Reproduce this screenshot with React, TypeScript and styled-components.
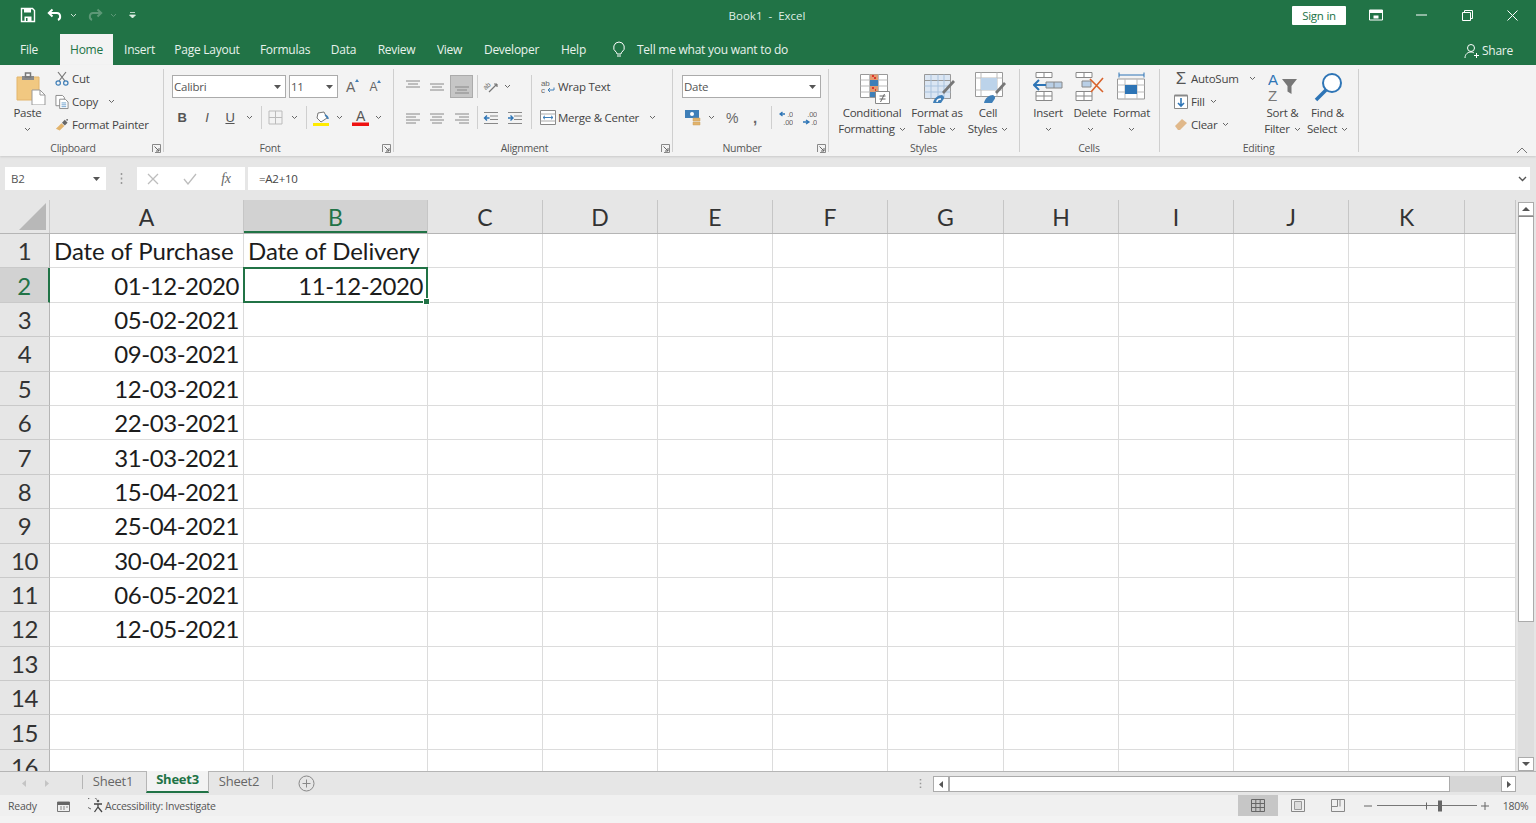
import React from "react";
import styled, { createGlobalStyle } from "styled-components";

const Global = createGlobalStyle`
  html, body { margin: 0; padding: 0; height: 100%; overflow: hidden; background: #f3f3f3; }
  #root { height: 100%; }
  * { box-sizing: border-box; }
`;

const UI = `"Open Sans", "Noto Sans", "Liberation Sans", sans-serif`;
const GREEN = "#217346";

const Page = styled.div`
  width: 1536px; height: 823px; display: flex; flex-direction: column;
  font-family: ${UI}; font-size: 11.5px; color: #444; letter-spacing: -0.25px; overflow: hidden;
`;
const TitleBar = styled.header`
  height: 33px; flex: none; background: ${GREEN}; display: flex; align-items: center; color: #fff; position: relative; padding-bottom: 3px;
`;
const Slot = styled.div<{ $w: number }>`
  width: ${p => p.$w}px; flex: none; display: flex; align-items: center; justify-content: center; height: 100%;
`;
const Spacer = styled.div<{ $w?: number }>`
  ${p => (p.$w ? `width:${p.$w}px; flex:none;` : "flex:1;")}
`;
const WindowTitle = styled.div`
  width: 200px; flex: none; text-align: center; color: #dfeee5; font-size: 11.5px; white-space: pre; letter-spacing: 0;
`;
const SignIn = styled.div`
  width: 54px; height: 19px; flex: none; background: #fff; color: ${GREEN}; display: flex; align-items: center; justify-content: center; font-size: 11.5px; border-radius: 1px;
`;
const TabBar = styled.nav`
  height: 32px; flex: none; background: ${GREEN}; display: flex; align-items: flex-end; color: #e8f2ec; font-size: 12px;
`;
const Tab = styled.div<{ $w: number; $active?: boolean }>`
  width: ${p => p.$w}px; flex: none; height: 31px; display: flex; align-items: center; justify-content: center; white-space: nowrap; padding-bottom: 1px;
  ${p => p.$active && `background:#f3f3f3; color:${GREEN};`}
`;
const TabGap = styled.div<{ $w: number }>` width: ${p => p.$w}px; flex: none; `;
const TellMe = styled.div`
  flex: none; height: 31px; display: flex; align-items: center; gap: 11px; white-space: nowrap; color: #e8f2ec; padding-bottom: 1px;
`;
const Share = styled.div`
  flex: none; height: 31px; display: flex; align-items: center; gap: 2px; margin: 0 23px 0 auto; color: #e8f2ec; padding-top: 2px;
`;

const Ribbon = styled.section`
  height: 91px; flex: none; background: #f3f3f3; display: flex; position: relative; box-shadow: 0 1px 2px rgba(0,0,0,.12); z-index: 2;
`;
const Group = styled.div<{ $w: number }>`
  width: ${p => p.$w}px; flex: none; display: flex; flex-direction: column; position: relative; 
  &::after { content: ""; position: absolute; right: 0; top: 4px; bottom: 4px; width: 1px; background: #cfcfcf; }
`;
const GroupBody = styled.div<{ $pl?: number; $pt?: number }>`
  height: 75px; flex: none; display: flex; padding-left: ${p => p.$pl ?? 0}px; padding-top: ${p => p.$pt ?? 0}px;
`;
const GroupLabel = styled.div<{ $launcher?: boolean }>`
  height: 16px; flex: none; text-align: center; font-size: 10.5px; line-height: 16px; color: #555;
  padding-right: ${p => (p.$launcher ? 18 : 2)}px;
`;
const Launcher = styled.svg`
  position: absolute; right: 3px; bottom: 3px; width: 9px; height: 9px;
`;
const Stack = styled.div<{ $w?: number }>`
  display: flex; flex-direction: column; gap: 8px; ${p => p.$w && `width:${p.$w}px; flex:none;`}
`;
const Row = styled.div`
  height: 23px; display: flex; align-items: center; white-space: nowrap;
`;
const SmallList = styled.div<{ $w: number }>`
  width: ${p => p.$w}px; flex: none; display: flex; flex-direction: column; padding-top: 2px;
`;
const SmallItem = styled.div`
  height: 23px; display: flex; align-items: center; white-space: nowrap;
`;
const Big = styled.div<{ $w: number }>`
  width: ${p => p.$w}px; flex: none; display: flex; flex-direction: column; align-items: center; padding-top: 7px;
`;
const BigIcon = styled.div<{ $shift?: number }>`
  height: 33px; display: flex; align-items: flex-start; justify-content: center; padding-left: ${p => p.$shift ?? 0}px;
`;
const BigText = styled.div`
  height: 16px; line-height: 16px; white-space: nowrap; display: flex; align-items: center; gap: 4px; 
`;
const Select = styled.div<{ $w: number }>`
  width: ${p => p.$w}px; height: 23px; flex: none; background: #fff; border: 1px solid #ababab; display: flex; align-items: center; justify-content: space-between; padding: 0 4px 0 1px; color: #555;
`;
const Active = styled.div`
  width: 23px; height: 23px; background: #c6c6c6; border: 1px solid #ababab; display: flex; align-items: center; justify-content: center;
`;
const Letter = styled.span<{ $bold?: boolean; $italic?: boolean; $under?: boolean; $size?: number; $color?: string }>`
  font-family: "Liberation Sans", sans-serif; font-size: ${p => p.$size ?? 13}px; color: ${p => p.$color ?? "#555"};
  font-weight: ${p => (p.$bold ? 700 : 400)}; font-style: ${p => (p.$italic ? "italic" : "normal")}; text-decoration: ${p => (p.$under ? "underline" : "none")};
  line-height: 1; position: relative;
`;
const FxLetter = styled(Letter)` font-family: "Liberation Serif", serif; `;
const VSep = styled.div<{ $h?: number }>` width: 1px; height: ${p => p.$h ?? 23}px; background: #cfcfcf; `;
const FullSep = styled.div` width: 1px; height: 54px; background: #cfcfcf; flex: none; margin: 0 6px; `;
const Collapse = styled.svg`
  position: absolute; right: 8px; bottom: 2px; width: 12px; height: 7px;
`;

const FormulaArea = styled.section`
  height: 44px; flex: none; background: #e6e6e6; display: flex; padding: 11px 6px 10px 5px; align-items: stretch;
`;
const NameBox = styled.div`
  width: 101px; flex: none; background: #fff; display: flex; align-items: center; justify-content: space-between; padding: 0 6px 0 6px; font-size: 11.5px; color: #555;
`;
const Grip = styled.div`
  width: 31px; flex: none; display: flex; align-items: center; justify-content: center;
`;
const FxBox = styled.div`
  width: 108px; flex: none; background: #fff; display: flex; align-items: center; margin-right: 3px;
`;
const FormulaInput = styled.div`
  flex: 1; background: #fff; display: flex; align-items: center; justify-content: space-between; padding: 0 3px 0 11px; font-size: 11.5px; color: #444;
`;

const Work = styled.main` height: 571px; flex: none; display: flex; background: #fff; `;
const SheetView = styled.div`
  width: 1516px; flex: none; overflow: hidden; font-family: Lato, Carlito, "Liberation Sans", sans-serif; letter-spacing: 0;
`;
const COLS = "50px 194px 184px 115px 115px 115px 115px 116px 115px 115px 115px 116px 51px";
const ColHead = styled.div`
  display: grid; grid-template-columns: ${COLS}; height: 34px; background: #e6e6e6; border-bottom: 1px solid #b5b5b5;
`;
const Corner = styled.div`
  display: flex; align-items: flex-end; justify-content: flex-end; padding: 0 3px 3px 0; border-right: 1px solid #c9c9c9;
`;
const ColLabel = styled.div<{ $sel?: boolean }>`
  display: flex; align-items: center; justify-content: center; font-size: 23px; color: ${p => (p.$sel ? GREEN : "#333")};
  border-right: 1px solid #c6c6c6; background: ${p => (p.$sel ? "#d2d2d2" : "transparent")};
  ${p => p.$sel && `box-shadow: inset 0 -2px 0 ${GREEN};`}
`;
const GridRow = styled.div`
  display: grid; grid-template-columns: ${COLS}; height: 34.4px;
`;
const RowLabel = styled.div<{ $sel?: boolean }>`
  background: ${p => (p.$sel ? "#d2d2d2" : "#e6e6e6")}; color: ${p => (p.$sel ? GREEN : "#333")}; font-size: 24px; display: flex; align-items: center; justify-content: center;
  border-bottom: 1px solid #c9c9c9; border-right: ${p => (p.$sel ? `2px solid ${GREEN}` : "1px solid #b5b5b5")}; letter-spacing: -0.3px;
`;
const Cell = styled.div<{ $right?: boolean; $sel?: boolean }>`
  position: relative; border-right: 1px solid #dcdcdc; border-bottom: 1px solid #dcdcdc; font-size: 24px; color: #1c1c1c; display: flex; align-items: center; white-space: nowrap;
  justify-content: ${p => (p.$right ? "flex-end" : "flex-start")}; padding: 0 ${p => (p.$right ? 4 : 3)}px 0 4px; letter-spacing: ${p => (p.$right ? "-0.45px" : "-0.05px")};
  ${p => p.$sel && `
    &::before { content:""; position:absolute; left:-1px; top:-1px; right:-1px; bottom:-1px; border:2px solid ${GREEN}; }
    &::after { content:""; position:absolute; right:-3px; bottom:-3px; width:5px; height:5px; background:${GREEN}; border:1px solid #fff; z-index:1; }
  `}
`;
const VScroll = styled.aside`
  flex: 1; background: #e6e6e6; padding: 2px 2px 0; display: flex; flex-direction: column;
`;
const ScrollBtn = styled.div<{ $w?: number; $h?: number }>`
  width: ${p => (p.$w ? `${p.$w}px` : "100%")}; height: ${p => (p.$h ? `${p.$h}px` : "100%")}; flex: none; background: #fff; border: 1px solid #ababab; display: flex; align-items: center; justify-content: center;
`;
const VThumb = styled.div` height: 406px; flex: none; background: #fff; border: 1px solid #ababab; border-top-color: #888; `;
const VTrack = styled.div` flex: 1; background: #dedede; `;

const SheetBar = styled.footer`
  height: 24px; flex: none; background: #e6e6e6; border-top: 1px solid #b5b5b5; display: flex; align-items: stretch; font-size: 13px;
`;
const SheetTab = styled.div<{ $active?: boolean }>`
  width: 63px; flex: none; display: flex; align-items: center; justify-content: center; padding-bottom: 4px; margin-bottom: 2px;
  color: ${p => (p.$active ? GREEN : "#666")}; font-weight: ${p => (p.$active ? 700 : 400)}; padding-right: ${p => (p.$active ? 0 : 3)}px;
  ${p => p.$active && `background:#f3f3f3; border-bottom:2px solid ${GREEN}; border-left:1px solid #b5b5b5; border-right:1px solid #b5b5b5; margin-top:-1px;`}
`;
const BarSep = styled.div` width: 1px; flex: none; background: #b5b5b5; margin: 3px 0 6px; `;
const HScroll = styled.div`
  width: 583px; flex: none; display: flex; margin: 4px 0 3px; 
`;
const HThumb = styled.div` width: 501px; flex: none; background: #fff; border: 1px solid #ababab; `;
const HTrack = styled.div` flex: 1; background: #d6d6d6; `;

const StatusBar = styled.footer`
  height: 21px; flex: none; background: #f0f0f0; display: flex; align-items: stretch; font-size: 10.5px; color: #555;
`;
const StatusText = styled.div<{ $w?: number }>`
  display: flex; align-items: center; white-space: nowrap; ${p => p.$w && `width:${p.$w}px; flex:none;`}
`;
const ViewBtn = styled.div<{ $on?: boolean }>`
  width: 40px; flex: none; display: flex; align-items: center; justify-content: center; background: ${p => (p.$on ? "#c6c6c6" : "transparent")};
`;
const Slider = styled.div`
  width: 100px; flex: none; position: relative; display: flex; align-items: center;
  &::before { content: ""; width: 100%; height: 1px; background: #777; }
`;
const SliderThumb = styled.div<{ $x: number; $w: number; $h: number }>`
  position: absolute; left: ${p => p.$x}px; top: 50%; width: ${p => p.$w}px; height: ${p => p.$h}px; transform: translateY(-50%); background: #666;
`;
const BottomStrip = styled.div` flex: 1; background: #f3f3f3; `;

type IP = { w: number; h: number; children: React.ReactNode };
const Ic = ({ w, h, children }: IP) => (
  <svg width={w} height={h} viewBox={`0 0 ${w} ${h}`} fill="none">{children}</svg>
);
const Chev = ({ c = "#666" }: { c?: string }) => (
  <Ic w={7} h={5}><path d="M1 1l2.5 2.5L6 1" stroke={c} strokeWidth="1" /></Ic>
);
const Caret = () => <Ic w={7} h={4}><path d="M0 0h7L3.5 4z" fill="#555" /></Ic>;
const Lines = ({ ys, x1s, x2s }: { ys: number[]; x1s: number[]; x2s: number[] }) => (
  <Ic w={14} h={18}>{ys.map((y, i) => <path key={i} d={`M${x1s[i]} ${y}H${x2s[i]}`} stroke="#888" strokeWidth="1" />)}</Ic>
);

const Save = () => (
  <Ic w={16} h={16}><path d="M1.5 1.5h11l2 2v11h-13z" stroke="#fff" strokeWidth="1.4" /><path d="M4 1.5h7v4H4z" fill="#fff" /><path d="M4.5 9.5h7v5h-7z" fill="#fff" /><path d="M6 11h1.5v3H6z" fill={GREEN} /></Ic>
);
const Undo = ({ c, flip }: { c: string; flip?: boolean }) => (
  <Ic w={16} h={14}><g transform={flip ? "translate(16 0) scale(-1 1)" : undefined}><path d="M5.5 1.5L1.8 5l3.7 3.5" stroke={c} strokeWidth="2" /><path d="M2.5 5H10c3.6 0 4.4 5.5 1 7" stroke={c} strokeWidth="2" /></g></Ic>
);
const Launch = () => (
  <Launcher viewBox="0 0 9 9" fill="none"><path d="M.5 8V.5H8.5V8.5H3" stroke="#888" /><path d="M2.5 2.5L7 7M7 4v3H4" stroke="#666" /></Launcher>
);
const Paste = () => (
  <Ic w={30} h={33}><path d="M1 5h22v23H1z" fill="#f1c881" stroke="#e3b56c" /><path d="M6 4h12v4H6z" fill="#8a8a8a" /><path d="M9.5 1h5v4h-5z" fill="none" stroke="#777" strokeWidth="1.5" /><path d="M16 18h8l5 5v10H16z" fill="#fff" stroke="#999" /><path d="M24 18v5h5" stroke="#999" /></Ic>
);
const Cut = () => (
  <Ic w={14} h={15}><path d="M3 1l7 9M11 1L4 10" stroke="#777" strokeWidth="1.2" /><circle cx="3.2" cy="12" r="2.2" stroke="#3f7fb8" strokeWidth="1.2" /><circle cx="10.8" cy="12" r="2.2" stroke="#3f7fb8" strokeWidth="1.2" /></Ic>
);
const Copy = () => (
  <Ic w={15} h={16}><path d="M1 1h7l2 2v9H1z" fill="#fff" stroke="#888" /><path d="M5 5h6l3 3v7H5z" fill="#fff" stroke="#888" /><path d="M7 9h5M7 11h5M7 13h5" stroke="#6ea0cc" /></Ic>
);
const Brush = () => (
  <Ic w={15} h={14}><path d="M1 11l6-6 3 3-5 5z" fill="#e2b36b" /><path d="M7.5 4.5l3-3 3 3-3 3z" fill="#666" /><circle cx="13" cy="1.5" r="1" fill="#666" /></Ic>
);
const SmallCaret = styled.span`
  position: absolute; top: -1px; right: -4px; width: 0; height: 0; border-left: 2.5px solid transparent; border-right: 2.5px solid transparent; border-bottom: 3px solid #3f7fb8;
`;
const Grow = ({ size }: { size: number }) => (
  <Slot $w={23}><Letter $size={size} $color="#666">A<SmallCaret /></Letter></Slot>
);
const Borders = () => (
  <Ic w={15} h={15}><path d="M1 1h13v13H1zM7.5 1v13M1 7.5h13" stroke="#bbb" /></Ic>
);
const Fill = () => (
  <Ic w={17} h={16}><path d="M5 3l6-1 3 6-6 4-4-4z" fill="#fff" stroke="#777" /><path d="M12 5c2 1 3 2 3 4" stroke="#3f7fb8" strokeWidth="1.5" /><path d="M0 13h16v3H0z" fill="#ffeb00" /></Ic>
);
const ColorA = () => (
  <Ic w={17} h={17}><path d="M0 13.5h17V17H0z" fill="#ee1111" /><text x="8.5" y="12" fontFamily="Liberation Sans" fontSize="14" fill="#555" textAnchor="middle">A</text></Ic>
);
const Orient = () => (
  <Ic w={16} h={15}><text x="1" y="9" fontFamily="Liberation Sans" fontSize="7" fill="#666" transform="rotate(-40 5 8)">ab</text><path d="M6 13L14 5M14 5h-3M14 5v3" stroke="#777" strokeWidth="1.2" /></Ic>
);
const Indent = ({ flip }: { flip?: boolean }) => (
  <Ic w={16} h={14}><path d="M1 1.5h14M7 5h8M7 8.5h8M1 12.5h14" stroke="#888" /><path d={flip ? "M1 7h5M3.5 4.5L6 7 3.5 9.5" : "M1.5 7h5M4 4.5L1.5 7 4 9.5"} stroke="#2e75b6" strokeWidth="1.4" /></Ic>
);
const Wrap = () => (
  <Ic w={14} h={15}><text x="0" y="7" fontFamily="Liberation Sans" fontSize="8" fill="#666">ab</text><text x="0" y="14" fontFamily="Liberation Sans" fontSize="8" fill="#666">c</text><path d="M13 8.5v2.5H7M9 9l-2 2 2 2" stroke="#3f7fb8" /></Ic>
);
const Merge = () => (
  <Ic w={16} h={15}><path d="M.5.5h15v14H.5z" stroke="#888" fill="#fff" /><path d="M.5 4h15M.5 11h15" stroke="#aaa" /><path d="M3 7.5h10M5 5.8L3 7.5l2 1.7M11 5.8l2 1.7-2 1.7" stroke="#3f7fb8" /></Ic>
);
const Currency = () => (
  <Ic w={17} h={17}><path d="M1 1h14v8H1z" fill="#3f7fb8" /><circle cx="8" cy="5" r="2" fill="#fff" /><path d="M9 9h7v3H9zM9 13h7v3H9z" fill="#e2b36b" stroke="#caa060" strokeWidth=".5" /></Ic>
);
const Dec = ({ more }: { more?: boolean }) => (
  <Ic w={14} h={16}>
    <text x="14" y="7" fontFamily="Liberation Sans" fontSize="7.5" fill="#666" textAnchor="end">{more ? ".00" : ".0"}</text>
    <text x="14" y="15" fontFamily="Liberation Sans" fontSize="7.5" fill="#666" textAnchor="end">{more ? ".0" : ".00"}</text>
    <path d={more ? "M0 12h6M3 10l3 2-3 2" : "M1 4h5M3.5 2L1 4l2.5 2"} stroke="#2e75b6" strokeWidth="1.3" />
  </Ic>
);
const CondFmt = () => (
  <Ic w={31} h={33}><path d="M.5 2.5h27v23H.5z" fill="#fff" stroke="#999" /><path d="M.5 8h27M.5 14h27M.5 20h27M9.5 2.5v23M18.5 2.5v23" stroke="#bbb" /><path d="M10 2.5h8V8h-8z" fill="#e39a6f" /><path d="M10 8h8v6h-8z" fill="#3f7fb8" /><path d="M10 14h8v6h-8z" fill="#e39a6f" /><path d="M10 20h8v5h-8z" fill="#3f7fb8" /><path d="M12 4h2M14 6h2M12 16h2M15 18h1" stroke="#e01515" strokeWidth="1.4" /><path d="M15.5 19.5h14v12h-14z" fill="#fff" stroke="#888" /><path d="M19.5 24h6M19.5 27h6M24.500 22l-4 8" stroke="#666" /></Ic>
);
const FmtTable = () => (
  <Ic w={31} h={33}><path d="M.5 2.5h26v24H.5z" fill="#dbe6f3" stroke="#999" /><path d="M.5 8.500h26" stroke="#999" /><path d="M7 2.500v24M14 2.500v24M20 2.500v24M.5 14h26M.5 20h26" stroke="#a9c2dd" /><path d="M18 20l11-12 2 2-11 12z" fill="#777" /><path d="M9 31c1-5 5-8 9-8 2 1 3 3 1 5l-2 3z" fill="#3f7fb8" /><path d="M13 30c0-2 2-3 4-3" stroke="#fff" strokeWidth="1.5" /></Ic>
);
const CellStyles = () => (
  <Ic w={31} h={33}><path d="M.5.5h27v24H.5z" fill="#fff" stroke="#999" /><path d="M.5 6h27M.5 18h27M6 .5v24M22 .5v24" stroke="#bbb" /><path d="M6 6h16v12H6z" fill="#bcd3ea" /><path d="M20 20l9-10 2 2-9 10z" fill="#777" /><path d="M9 31c1-5 5-8 9-8 2 1 3 3 1 5l-2 3z" fill="#3f7fb8" /></Ic>
);
const Insert = () => (
  <Ic w={30} h={30}><path d="M3 .5h16v5H3zM11 .5v5M3 19.500h16v9H3zM11 19.500v9M3 24h16" stroke="#888" fill="#fff" /><path d="M13 10h16v6H13z" fill="#b9cfe6" stroke="#888" /><path d="M21 10v6" stroke="#888" /><path d="M13 13H1M6 8l-5 5 5 5" stroke="#2e75b6" strokeWidth="2" /></Ic>
);
const Delete = () => (
  <Ic w={30} h={30}><path d="M1 .5h16v5H1zM9 .5v5M1 19.500h16v9H1zM9 19.500v9M1 24h16" stroke="#888" fill="#fff" /><path d="M7 9h9v6H7z" fill="#b9cfe6" stroke="#888" /><path d="M15 7l13 13M28 6L16 20" stroke="#d9622b" strokeWidth="1.6" /></Ic>
);
const FormatIc = () => (
  <Ic w={29} h={32}><path d="M2 3h25M2 .5v5M27 .5v5" stroke="#2e75b6" /><path d="M.5 7h27v20H.5z" fill="#fff" stroke="#999" /><path d="M.5 13h27M.5 20h27M8 7v20M20 7v20" stroke="#bbb" /><path d="M8 13h12v9H8z" fill="#2e75b6" /></Ic>
);
const FillDown = () => (
  <Ic w={15} h={16}><path d="M.5 1.500h13v13H.5z" fill="#fff" stroke="#888" /><path d="M.5 1.500h13" stroke="#888" strokeWidth="2" /><path d="M7 4v8M4 9l3 3 3-3" stroke="#2e75b6" strokeWidth="1.6" /></Ic>
);
const Eraser = () => (
  <Ic w={14} h={13}><path d="M1 8l7-7 5 4-7 7H4z" fill="#e0b88a" /></Ic>
);
const SortIc = () => (
  <Ic w={30} h={32}><text x="0" y="13" fontFamily="Liberation Sans" fontSize="15" fill="#2e75b6">A</text><text x="0" y="29" fontFamily="Liberation Sans" fontSize="15" fill="#777">Z</text><path d="M14 7h15l-5.500 7v8l-4-2.500V14z" fill="#777" /></Ic>
);
const FindIc = () => (
  <Ic w={30} h={32}><circle cx="19" cy="11" r="9" stroke="#2e75b6" strokeWidth="2" fill="#fff" /><path d="M13 18L3 28" stroke="#2e75b6" strokeWidth="3.6" /></Ic>
);

const dates = ["01-12-2020","05-02-2021","09-03-2021","12-03-2021","22-03-2021","31-03-2021","15-04-2021","25-04-2021","30-04-2021","06-05-2021","12-05-2021"];
const colLetters = ["A","B","C","D","E","F","G","H","I","J","K",""];
const tabs: [string, number, number][] = [["Insert",29,12],["Page Layout",64,21],["Formulas",48,22],["Data",25,22],["Review",37,22],["View",25,22],["Developer",55,22],["Help",25,22]];

export default function App() {
  const rows = Array.from({ length: 16 }, (_, i) => i + 1);
  return (
    <Page>
      <Global />
      <TitleBar>
        <Spacer $w={20} /><Slot $w={16}><Save /></Slot>
        <Spacer $w={11} /><Slot $w={16}><Undo c="#fff" /></Slot>
        <Spacer $w={7} /><Slot $w={7}><Chev c="#cfe3d7" /></Slot>
        <Spacer $w={10} /><Slot $w={16}><Undo c="#5d9877" flip /></Slot>
        <Spacer $w={7} /><Slot $w={7}><Chev c="#5d9877" /></Slot>
        <Spacer $w={12} /><Slot $w={7}><Ic w={7} h={7}><path d="M1 .5h5M.5 3l3 3 3-3z" stroke="#dfeee5" fill="#dfeee5" strokeWidth=".8" /></Ic></Slot>
        <Spacer $w={531} /><WindowTitle>{"Book1  -  Excel"}</WindowTitle>
        <Spacer $w={425} /><SignIn>Sign in</SignIn>
        <Spacer $w={20} /><Slot $w={20}><Ic w={14} h={12}><path d="M.5 1h13v10H.5z" stroke="#fff" fill="none" /><path d="M1 1h12v3H1z" fill="#fff" /><path d="M4.500 9.500V6.500h5v3z" fill="#fff" /></Ic></Slot>
        <Spacer $w={25} /><Slot $w={20}><Ic w={11} h={2}><path d="M0 1h11" stroke="#fff" /></Ic></Slot>
        <Spacer $w={26} /><Slot $w={20}><Ic w={11} h={11}><path d="M.5 2.500h8v8h-8zM2.500 2.500V.5h8v8H8.500" stroke="#fff" /></Ic></Slot>
        <Spacer $w={25} /><Slot $w={20}><Ic w={11} h={11}><path d="M.5.5l10 10M10.500.5l-10 10" stroke="#fff" /></Ic></Slot>
      </TitleBar>
      <TabBar>
        <TabGap $w={10} /><Tab $w={38}>File</Tab><TabGap $w={12} />
        <Tab $w={53} $active>Home</Tab>
        {tabs.map(([t, w, g]) => (
          <React.Fragment key={t}><TabGap $w={g} /><Tab $w={w}>{t}</Tab></React.Fragment>
        ))}
        <TabGap $w={26} />
        <TellMe>
          <Ic w={14} h={17}><path d="M7 1a5.500 5.500 0 0 0-3 10c.6.500 1 1 1 2h4c0-1 .4-1.500 1-2A5.500 5.500 0 0 0 7 1zM5 15h4" stroke="#fff" /></Ic>
          Tell me what you want to do
        </TellMe>
        <Share>
          <Ic w={16} h={16}><circle cx="7" cy="5" r="3.500" stroke="#fff" /><path d="M1 15c0-4 3-6 6-6 1.500 0 2.500.5 3 1M12.500 10v5M10 12.500h5" stroke="#fff" /></Ic>
          Share
        </Share>
      </TabBar>
      <Ribbon>
        <Group $w={164}>
          <GroupBody>
            <Big $w={55}><BigIcon $shift={7}><Paste /></BigIcon><BigText>Paste</BigText><BigText><Chev /></BigText></Big>
            <SmallList $w={108}>
              <SmallItem><Slot $w={14}><Cut /></Slot><Spacer $w={3} />Cut</SmallItem>
              <SmallItem><Slot $w={14}><Copy /></Slot><Spacer $w={3} />Copy<Spacer $w={10} /><Chev /></SmallItem>
              <SmallItem><Slot $w={14}><Brush /></Slot><Spacer $w={3} />Format Painter</SmallItem>
            </SmallList>
          </GroupBody>
          <GroupLabel $launcher>Clipboard</GroupLabel><Launch />
        </Group>
        <Group $w={230}>
          <GroupBody $pl={8} $pt={10}>
            <Stack>
              <Row>
                <Select $w={114}><span>Calibri</span><Caret /></Select><Spacer $w={3} />
                <Select $w={49}><span>11</span><Caret /></Select><Spacer $w={1} />
                <Grow size={14} /><Grow size={12} />
              </Row>
              <Row>
                <Slot $w={20}><Letter $bold>B</Letter></Slot>
                <Slot $w={30}><Letter $italic>I</Letter></Slot>
                <Slot $w={16}><Letter $under>U</Letter></Slot>
                <Slot $w={22}><Chev /></Slot>
                <Slot $w={2}><VSep /></Slot>
                <Slot $w={26}><Borders /></Slot>
                <Slot $w={12}><Chev /></Slot>
                <Slot $w={12}><VSep /></Slot>
                <Slot $w={18}><Fill /></Slot>
                <Slot $w={18}><Chev /></Slot>
                <Slot $w={24}><ColorA /></Slot>
                <Slot $w={12}><Chev /></Slot>
              </Row>
            </Stack>
          </GroupBody>
          <GroupLabel $launcher>Font</GroupLabel><Launch />
        </Group>
        <Group $w={279}>
          <GroupBody $pl={8} $pt={10}>
            <Stack $w={123}>
              <Row>
                <Slot $w={22}><Lines ys={[3,6,9]} x1s={[0,2,0]} x2s={[14,12,14]} /></Slot>
                <Slot $w={26}><Lines ys={[6,9,12]} x1s={[0,2,0]} x2s={[14,12,14]} /></Slot>
                <Active><Lines ys={[9,12,15]} x1s={[0,2,0]} x2s={[14,12,14]} /></Active>
                <Slot $w={9}><VSep /></Slot>
                <Slot $w={18}><Orient /></Slot>
                <Slot $w={14}><Chev /></Slot>
              </Row>
              <Row>
                <Slot $w={22}><Lines ys={[5,8,11,14]} x1s={[0,0,0,0]} x2s={[14,10,14,10]} /></Slot>
                <Slot $w={26}><Lines ys={[5,8,11,14]} x1s={[0,2,0,2]} x2s={[14,12,14,12]} /></Slot>
                <Slot $w={23}><Lines ys={[5,8,11,14]} x1s={[0,4,0,4]} x2s={[14,14,14,14]} /></Slot>
                <Slot $w={9}><VSep /></Slot>
                <Slot $w={18}><Indent /></Slot>
                <Spacer $w={6} />
                <Slot $w={18}><Indent flip /></Slot>
              </Row>
            </Stack>
            <FullSep />
            <Stack>
              <Row><Slot $w={20}><Wrap /></Slot>Wrap Text</Row>
              <Row><Slot $w={20}><Merge /></Slot>Merge &amp; Center<Spacer $w={10} /><Chev /></Row>
            </Stack>
          </GroupBody>
          <GroupLabel $launcher>Alignment</GroupLabel><Launch />
        </Group>
        <Group $w={156}>
          <GroupBody $pl={9} $pt={10}>
            <Stack>
              <Row><Select $w={139}><span>Date</span><Caret /></Select></Row>
              <Row>
                <Slot $w={20}><Currency /></Slot>
                <Slot $w={18}><Chev /></Slot>
                <Slot $w={24}><Letter $size={14} $color="#666">%</Letter></Slot>
                <Slot $w={22}><Letter $size={15} $bold $color="#666">,</Letter></Slot>
                <Slot $w={10}><VSep /></Slot>
                <Slot $w={20}><Dec /></Slot>
                <Slot $w={28}><Dec more /></Slot>
              </Row>
            </Stack>
          </GroupBody>
          <GroupLabel $launcher>Number</GroupLabel><Launch />
        </Group>
        <Group $w={191}>
          <GroupBody $pl={6}>
            <Big $w={74}><BigIcon $shift={6}><CondFmt /></BigIcon><BigText>Conditional</BigText><BigText>Formatting<Chev /></BigText></Big>
            <Big $w={56}><BigIcon $shift={4}><FmtTable /></BigIcon><BigText>Format as</BigText><BigText>Table<Chev /></BigText></Big>
            <Big $w={46}><BigIcon $shift={4}><CellStyles /></BigIcon><BigText>Cell</BigText><BigText>Styles<Chev /></BigText></Big>
          </GroupBody>
          <GroupLabel>Styles</GroupLabel>
        </Group>
        <Group $w={140}>
          <GroupBody $pl={7}>
            <Big $w={42}><BigIcon><Insert /></BigIcon><BigText>Insert</BigText><BigText><Chev /></BigText></Big>
            <Big $w={42}><BigIcon><Delete /></BigIcon><BigText>Delete</BigText><BigText><Chev /></BigText></Big>
            <Big $w={41}><BigIcon><FormatIc /></BigIcon><BigText>Format</BigText><BigText><Chev /></BigText></Big>
          </GroupBody>
          <GroupLabel>Cells</GroupLabel>
        </Group>
        <Group $w={199}>
          <GroupBody $pl={11}>
            <SmallList $w={89}>
              <SmallItem><Slot $w={20}><Letter $size={17} $color="#555">Σ</Letter></Slot>AutoSum<Spacer $w={10} /><Chev /></SmallItem>
              <SmallItem><Slot $w={20}><FillDown /></Slot>Fill<Spacer $w={5} /><Chev /></SmallItem>
              <SmallItem><Slot $w={20}><Eraser /></Slot>Clear<Spacer $w={5} /><Chev /></SmallItem>
            </SmallList>
            <Big $w={45}><BigIcon><SortIc /></BigIcon><BigText>Sort &amp;</BigText><BigText>Filter<Chev /></BigText></Big>
            <Big $w={45}><BigIcon><FindIc /></BigIcon><BigText>Find &amp;</BigText><BigText>Select<Chev /></BigText></Big>
          </GroupBody>
          <GroupLabel>Editing</GroupLabel>
        </Group>
        <Collapse viewBox="0 0 12 7" fill="none"><path d="M1 6l5-5 5 5" stroke="#777" /></Collapse>
      </Ribbon>
      <FormulaArea>
        <NameBox>B2<Caret /></NameBox>
        <Grip><Ic w={3} h={11}><path d="M1.500 0v2M1.500 4.500v2M1.500 9v2" stroke="#999" strokeWidth="1.500" /></Ic></Grip>
        <FxBox>
          <Slot $w={32}><Ic w={12} h={12}><path d="M1 1l10 10M11 1L1 11" stroke="#bdbdbd" strokeWidth="1.300" /></Ic></Slot>
          <Slot $w={42}><Ic w={14} h={12}><path d="M1 6l4 5 8-10" stroke="#bdbdbd" strokeWidth="1.300" /></Ic></Slot>
          <Slot $w={30}><FxLetter $italic $size={14} $color="#666">fx</FxLetter></Slot>
        </FxBox>
        <FormulaInput>=A2+10<Ic w={9} h={6}><path d="M1 1l3.500 3.500L8 1" stroke="#555" strokeWidth="1.400" /></Ic></FormulaInput>
      </FormulaArea>
      <Work>
        <SheetView>
          <ColHead>
            <Corner><Ic w={27} h={27}><path d="M27 0v27H0z" fill="#b8b8b8" /></Ic></Corner>
            {colLetters.map((l, i) => <ColLabel key={i} $sel={l === "B"}>{l}</ColLabel>)}
          </ColHead>
          {rows.map(r => (
            <GridRow key={r}>
              <RowLabel $sel={r === 2}>{r}</RowLabel>
              {colLetters.map((l, i) => {
                let text = "";
                if (r === 1 && i === 0) text = "Date of Purchase";
                if (r === 1 && i === 1) text = "Date of Delivery";
                if (r >= 2 && r <= 12 && i === 0) text = dates[r - 2];
                if (r === 2 && i === 1) text = "11-12-2020";
                return <Cell key={i} $right={r > 1} $sel={r === 2 && i === 1}>{text}</Cell>;
              })}
            </GridRow>
          ))}
        </SheetView>
        <VScroll>
          <ScrollBtn $h={14}><Ic w={8} h={4}><path d="M0 4L4 0l4 4z" fill="#555" /></Ic></ScrollBtn>
          <VThumb />
          <VTrack />
          <ScrollBtn $h={14}><Ic w={8} h={4}><path d="M0 0l4 4 4-4z" fill="#555" /></Ic></ScrollBtn>
        </VScroll>
      </Work>
      <SheetBar>
        <Spacer $w={21} /><Slot $w={6}><Ic w={4} h={7}><path d="M4 0L0 3.500 4 7z" fill="#c4c4c4" /></Ic></Slot>
        <Spacer $w={17} /><Slot $w={6}><Ic w={4} h={7}><path d="M0 0l4 3.500L0 7z" fill="#c4c4c4" /></Ic></Slot>
        <Spacer $w={32} /><BarSep />
        <SheetTab>Sheet1</SheetTab>
        <SheetTab $active>Sheet3</SheetTab>
        <SheetTab>Sheet2</SheetTab>
        <BarSep />
        <Spacer $w={25} />
        <Slot $w={17}><Ic w={17} h={17}><circle cx="8.500" cy="8.500" r="7.500" stroke="#888" /><path d="M8.500 4.500v8M4.500 8.500h8" stroke="#888" /></Ic></Slot>
        <Spacer $w={603} />
        <Slot $w={4}><Ic w={3} h={9}><path d="M1.500 0v1.500M1.500 3.700v1.500M1.500 7.500V9" stroke="#999" strokeWidth="1.500" /></Ic></Slot>
        <Spacer $w={11} />
        <HScroll>
          <ScrollBtn $w={16}><Ic w={4} h={7}><path d="M4 0L0 3.500 4 7z" fill="#555" /></Ic></ScrollBtn>
          <HThumb />
          <HTrack />
          <ScrollBtn $w={15}><Ic w={4} h={7}><path d="M0 0l4 3.500L0 7z" fill="#555" /></Ic></ScrollBtn>
        </HScroll>
      </SheetBar>
      <StatusBar>
        <Spacer $w={8} /><StatusText $w={48}>Ready</StatusText>
        <Slot $w={14}><Ic w={13} h={12}><path d="M.5 2h12v9.500H.5z" stroke="#777" /><path d="M.5 2h12v3H.5z" fill="#666" /><path d="M3 7h2M6 7h2M9 7h2M3 9h2M6 9h2" stroke="#888" /></Ic></Slot>
        <Spacer $w={17} />
        <Slot $w={18}><Ic w={17} h={15}><path d="M9 1.500A6 6 0 1 0 3 11" stroke="#666" /><circle cx="10" cy="3" r="1.300" fill="#555" /><path d="M6 6h8M10 6v3M6.500 14L10 9l4 5" stroke="#444" strokeWidth="1.300" /></Ic></Slot>
        <StatusText>Accessibility: Investigate</StatusText>
        <Spacer $w={1022} />
        <ViewBtn $on><Ic w={14} h={13}><path d="M.5.5h13v12H.5zM4.800.5v12M9.200.5v12M.5 4.500h13M.5 8.500h13" stroke="#666" /></Ic></ViewBtn>
        <ViewBtn><Ic w={14} h={13}><path d="M.5.5h13v12H.5z" stroke="#888" /><path d="M3.500 2.500h7v8h-7z" stroke="#999" fill="#ddd" /></Ic></ViewBtn>
        <ViewBtn><Ic w={14} h={13}><path d="M.5.5h13v12H.5zM.5 7.500h6V.5M9 .5v7" stroke="#888" /></Ic></ViewBtn>
        <Spacer $w={6} />
        <Slot $w={9}><Ic w={8} h={2}><path d="M0 1h8" stroke="#666" /></Ic></Slot>
        <Spacer $w={4} />
        <Slider><SliderThumb $x={49} $w={1} $h={7} /><SliderThumb $x={61} $w={4} $h={11} /></Slider>
        <Spacer $w={4} />
        <Slot $w={8}><Ic w={8} h={8}><path d="M0 4h8M4 0v8" stroke="#666" /></Ic></Slot>
        <Spacer $w={14} />
        <StatusText>180%</StatusText>
      </StatusBar>
      <BottomStrip />
    </Page>
  );
}
